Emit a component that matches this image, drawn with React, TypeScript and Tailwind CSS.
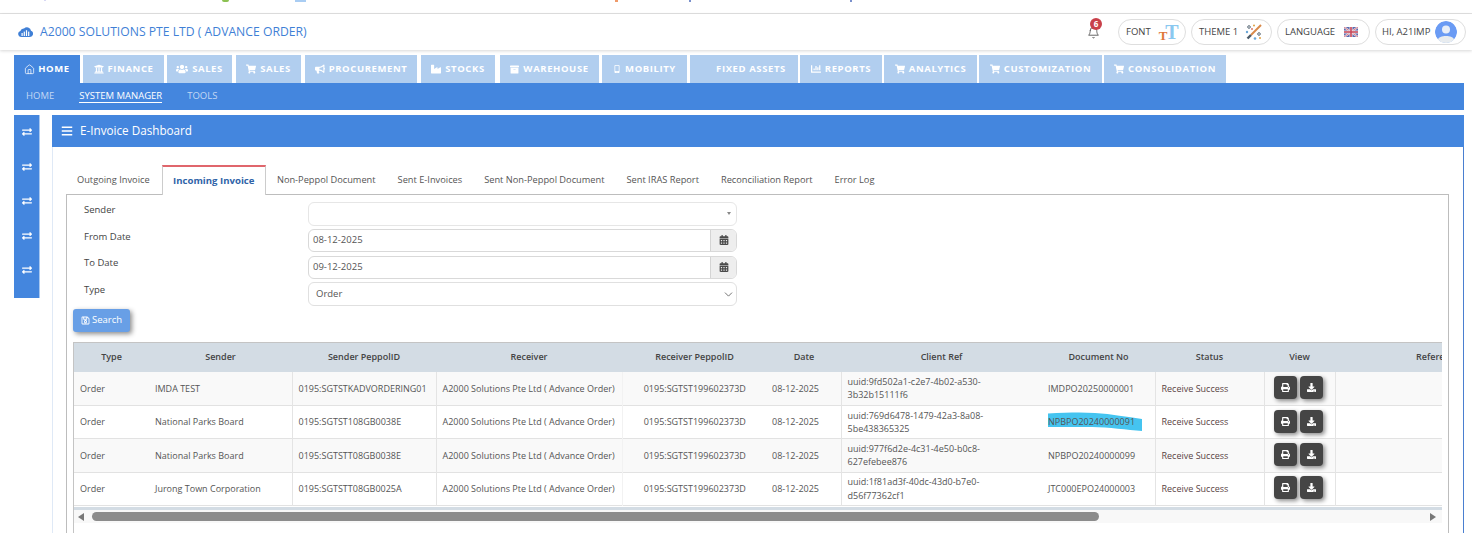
import React from "react";
import { FaUniversity, FaUsers, FaShoppingCart, FaBullhorn, FaIndustry, FaMobileAlt, FaArchive, FaChartBar, FaExchangeAlt, FaBars, FaRegSave, FaCalendarAlt, FaPrint, FaDownload } from "react-icons/fa";
import { LuHouse, LuBell, LuChevronDown } from "react-icons/lu";

const navTabs: { label: string; w: string; icon?: React.ReactNode; mr: string }[] = [
  { label: "FINANCE", w: "w-[81px]", icon: <FaUniversity size={10} />, mr: "mr-[3px]" },
  { label: "SALES", w: "w-[65px]", icon: <FaUsers size={12} />, mr: "mr-[4px]" },
  { label: "SALES", w: "w-[65px]", icon: <FaShoppingCart size={10} />, mr: "mr-[4px]" },
  { label: "PROCUREMENT", w: "w-[112px]", icon: <FaBullhorn size={10} />, mr: "mr-[4px]" },
  { label: "STOCKS", w: "w-[74px]", icon: <FaIndustry size={10} />, mr: "mr-[5px]" },
  { label: "WAREHOUSE", w: "w-[99px]", icon: <FaArchive size={9} />, mr: "mr-[3px]" },
  { label: "MOBILITY", w: "w-[85px]", icon: <FaMobileAlt size={8} />, mr: "mr-[3px]" },
  { label: "FIXED ASSETS", w: "w-[108px] pl-[14px]", mr: "mr-[2px]" },
  { label: "REPORTS", w: "w-[82px]", icon: <FaChartBar size={10} />, mr: "mr-[2px]" },
  { label: "ANALYTICS", w: "w-[93px]", icon: <FaShoppingCart size={10} />, mr: "mr-[2px]" },
  { label: "CUSTOMIZATION", w: "w-[123px]", icon: <FaShoppingCart size={10} />, mr: "mr-[2px]" },
  { label: "CONSOLIDATION", w: "w-[122px]", icon: <FaShoppingCart size={10} />, mr: "" },
];

const invoiceTabs = ["Outgoing Invoice", "Incoming Invoice", "Non-Peppol Document", "Sent E-Invoices", "Sent Non-Peppol Document", "Sent IRAS Report", "Reconciliation Report", "Error Log"];

const rows = [
  ["IMDA TEST", "0195:SGTSTKADVORDERING01", "uuid:9fd502a1-c2e7-4b02-a530-3b32b15111f6", "IMDPO20250000001"],
  ["National Parks Board", "0195:SGTST108GB0038E", "uuid:769d6478-1479-42a3-8a08-5be438365325", "NPBPO20240000091"],
  ["National Parks Board", "0195:SGTSTT08GB0038E", "uuid:977f6d2e-4c31-4e50-b0c8-627efebee876", "NPBPO20240000099"],
  ["Jurong Town Corporation", "0195:SGTSTT08GB0025A", "uuid:1f81ad3f-40dc-43d0-b7e0-d56f77362cf1", "JTC000EPO24000003"],
];

const headers: [string, string][] = [
  ["Type", "w-[75px]"], ["Sender", "w-[143px]"], ["Sender PeppolID", "w-[144px]"], ["Receiver", "w-[186px]"],
  ["Receiver PeppolID", "w-[145px]"], ["Date", "w-[74px]"], ["Client Ref", "w-[201px]"], ["Document No", "w-[113px]"],
  ["Status", "w-[109px]"], ["View", "w-[71px]"], ["Reference", "w-[206px]"],
];

function CloudIcon() {
  return (
    <svg width="15" height="11" viewBox="0 0 15 11" className="mr-[7px]">
      <path d="M3 11a3 3 0 0 1-.6-5.9A3.4 3.4 0 0 1 6 2.6 4 4 0 0 1 13 4.8 3.2 3.2 0 0 1 12 11z" fill="#3f7fd6" />
      <rect x="3.5" y="7" width="1.2" height="3" fill="#fff" />
      <rect x="5.7" y="5.6" width="1.2" height="4.4" fill="#fff" />
      <rect x="7.9" y="4.2" width="1.2" height="5.8" fill="#fff" />
      <rect x="10.1" y="5.6" width="1.2" height="4.4" fill="#fff" />
    </svg>
  );
}

function ThemeIcon() {
  return (
    <svg width="18" height="18" viewBox="0 0 18 18">
      <path d="M16 2 L6 12" stroke="#d98a4a" strokeWidth="2" />
      <path d="M6 12 L2.5 15.5" stroke="#4b5a68" strokeWidth="2.4" />
      <circle cx="4" cy="4" r="1.3" fill="none" stroke="#5b6b78" strokeWidth="1" />
      <circle cx="9" cy="2.5" r="1" fill="#e0a040" />
      <circle cx="2" cy="9" r="1.2" fill="#6aa7d8" />
      <circle cx="14" cy="11" r="1.3" fill="none" stroke="#5b6b78" strokeWidth="1" />
      <circle cx="10" cy="15.5" r="1.3" fill="#6aa7d8" />
      <circle cx="15" cy="15" r="1" fill="#e0a040" />
      <circle cx="7" cy="6" r="0.9" fill="#d96b5a" />
    </svg>
  );
}

function FlagIcon() {
  return (
    <svg width="14" height="10" viewBox="0 0 14 10">
      <rect width="14" height="10" fill="#5a6bb0" />
      <path d="M0 0 L14 10 M14 0 L0 10" stroke="#eadfe6" strokeWidth="2" />
      <path d="M0 0 L14 10 M14 0 L0 10" stroke="#cf5a6a" strokeWidth="0.7" />
      <path d="M7 0 V10 M0 5 H14" stroke="#eadfe6" strokeWidth="3" />
      <path d="M7 0 V10 M0 5 H14" stroke="#c9485a" strokeWidth="1.6" />
    </svg>
  );
}

function AvatarIcon() {
  return (
    <svg width="22" height="22" viewBox="0 0 22 22" className="rounded-full">
      <circle cx="11" cy="11" r="11" fill="#6a9bf4" />
      <circle cx="11" cy="8.5" r="4" fill="#e8eef8" />
      <path d="M2.5 19 C4 13.5 18 13.5 19.5 19 L16 22 H6 Z" fill="#e8ecef" />
    </svg>
  );
}

function Pill({ children, w }: { children: React.ReactNode; w: string }) {
  return <div className={`${w} h-[26px] border border-[#dedede] rounded-full flex items-center text-[9.5px] text-[#444] bg-white`}>{children}</div>;
}

function ActionButton({ children }: { children: React.ReactNode }) {
  return <button className="w-[23px] h-[23px] rounded-[4px] bg-[#454545] text-white flex items-center justify-center shadow-[2px_2px_4px_rgba(0,0,0,0.45)]">{children}</button>;
}

function FormLabel({ children }: { children: React.ReactNode }) {
  return <div className="w-[230px] pl-[11px] text-[9.5px] text-[#444]">{children}</div>;
}

function Marked({ children }: { children: React.ReactNode }) {
  return (
    <span className="relative inline-block">
      <svg width="96" height="20" viewBox="0 0 96 20" className="absolute -left-[1px] -top-[3px]">
        <path d="M1 1.5 C20 0.5 35 0 48 1 C65 2 80 5 95 7 L95 19 C80 18 62 15 45 15 C30 15 15 15 1 15 Z" fill="#45c4f0" />
      </svg>
      <span className="relative">{children}</span>
    </span>
  );
}

export default function App() {
  return (
    <div className="w-[1472px] h-[533px] overflow-hidden bg-white font-['Open_Sans',sans-serif] text-[#444]">
      {/* remains of the page above */}
      <div className="h-[14px] border-b border-[#e2e2e2] flex items-start">
        <div className="ml-[44px] w-[2px] h-[1px] bg-[#d8d8f4]" />
        <div className="ml-[176px] w-[7px] h-[2px] bg-[#8cc152] rounded-b-full" />
        <div className="ml-[66px] w-[11px] h-[2px] bg-[#a9cdf3]" />
        <div className="ml-[309px] w-[3px] h-[2px] bg-[#ef9a6a]" />
        <div className="ml-[71px] w-[2px] h-[2px] bg-[#7a90cc]" />
        <div className="ml-[159px] w-[2px] h-[2px] bg-[#7a90cc]" />
      </div>

      {/* header */}
      <header className="h-[36px] bg-white flex items-center shadow-[0_1px_3px_rgba(0,0,0,0.16)] relative">
        <div className="pl-[18px] flex items-center">
          <CloudIcon />
          <span className="text-[12.2px] font-medium text-[#3f7fd6]">A2000 SOLUTIONS PTE LTD ( ADVANCE ORDER)</span>
        </div>
        <div className="ml-auto flex items-center mr-[6px]">
          <div className="relative mr-[18px] text-[#444]">
            <LuBell size={13} strokeWidth={1.5} />
            <span className="absolute -top-[8px] left-[3px] w-[12px] h-[12px] rounded-full bg-[#c9404a] text-white text-[8px] font-bold flex items-center justify-center">6</span>
          </div>
          <Pill w="w-[68px] mr-[5px]">
            <span className="ml-[7px]">FONT</span>
            <span className="ml-[8px] font-['Liberation_Serif',serif] font-bold leading-none flex items-end">
              <span className="text-[13px] text-[#e0773a]">T</span>
              <span className="text-[20px] text-[#8ac8f0] -ml-[2px]">T</span>
            </span>
          </Pill>
          <Pill w="w-[81px] mr-[5px]">
            <span className="ml-[7px] mr-[7px]">THEME 1</span>
            <ThemeIcon />
          </Pill>
          <Pill w="w-[93px] mr-[5px]">
            <span className="ml-[7px] mr-[9px]">LANGUAGE</span>
            <FlagIcon />
          </Pill>
          <Pill w="w-[91px]">
            <span className="ml-[6px] mr-[5px]">HI, A21IMP</span>
            <AvatarIcon />
          </Pill>
        </div>
      </header>

      {/* nav tabs */}
      <nav className="mt-[5px] ml-[14px] flex h-[28px] items-stretch">
        <div className="w-[66px] mr-[3px] bg-[#4486de] text-white flex items-center justify-center gap-[3px] text-[9.5px] font-bold tracking-[0.6px]">
          <LuHouse size={11} strokeWidth={1.6} />
          <span>HOME</span>
        </div>
        {navTabs.map((t, i) => (
          <div key={i} className={`${t.w} ${t.mr} bg-[#b1ceef] text-white flex items-center justify-center gap-[4px] text-[9.5px] font-bold tracking-[0.6px]`}>
            {t.icon}
            <span>{t.label}</span>
          </div>
        ))}
      </nav>

      {/* sub nav */}
      <div className="ml-[14px] w-[1450px] h-[27px] bg-[#4486de] flex items-center text-[9.5px] pl-[12px]">
        <span className="text-[#c3d8f4]">HOME</span>
        <span className="ml-[25px] text-white border-b border-white leading-[12px]">SYSTEM MANAGER</span>
        <span className="ml-[25px] text-[#c3d8f4]">TOOLS</span>
      </div>

      <div className="mt-[5px] flex">
        {/* left rail */}
        <aside className="ml-[14px] w-[26px] h-[183px] bg-[#4486de] text-white flex flex-col items-center pt-[12px] gap-[24.5px] border-r border-[#a9c8f0]">
          {[0, 1, 2, 3, 4].map((i) => (
            <FaExchangeAlt key={i} size={10} />
          ))}
        </aside>

        {/* main panel */}
        <main className="ml-[12px] w-[1412px] h-[418px] border-l border-r border-l-[#dfe9f6] border-r-[#4a7fd0]">
          <div className="h-[32px] -ml-px -mr-px bg-[#4486de] text-white flex items-center pl-[9px] text-[11.7px]">
            <FaBars size={12} className="mr-[7px]" />
            <span>E-Invoice Dashboard</span>
          </div>

          <div className="pl-[13px] pr-[13px] pt-[18px]">
            {/* invoice tabs */}
            <div className="flex h-[29px] items-stretch relative z-10">
              {invoiceTabs.map((t) => {
                const active = t === "Incoming Invoice";
                return (
                  <div
                    key={t}
                    className={
                      active
                        ? "ml-[1px] px-[10.5px] -mb-px bg-white border-x border-[#ccc] border-t-2 border-t-[#e0666c] flex items-center text-[9.6px] font-bold text-[#2f63a8] whitespace-nowrap"
                        : "px-[11px] flex items-center text-[9.25px] text-[#555] whitespace-nowrap"
                    }
                  >
                    {t}
                  </div>
                );
              })}
            </div>

            {/* tab pane */}
            <div className="w-[1383px] h-[345px] border border-[#bdbdbd] flex flex-col pt-[6px] pl-[6px]">
              <div className="flex items-center h-[25px] mb-[2px]">
                <FormLabel>
                  <span className="relative bottom-[3px]">Sender</span>
                </FormLabel>
                <div className="ml-[5px] w-[429px] h-[24px] border border-[#e6e6e6] rounded-[6px] flex items-center justify-end pr-[5px] text-[#888]">
                  <span className="w-0 h-0 border-x-[2.5px] border-x-transparent border-t-[3px] border-t-[#888]" />
                </div>
              </div>
              <div className="flex items-center h-[24px] mb-[3px]">
                <FormLabel>
                  <span className="relative bottom-[3px]">From Date</span>
                </FormLabel>
                <div className="ml-[5px] w-[429px] h-[23px] border border-[#d9d9d9] rounded-[6px] flex items-stretch overflow-hidden">
                  <div className="flex-1 flex items-center pl-[4px] text-[9.5px] text-[#555]">08-12-2025</div>
                  <div className="w-[26px] bg-[#eeeeee] border-l border-[#d4d4d4] flex items-center justify-center text-[#4a4a4a]">
                    <FaCalendarAlt size={10} />
                  </div>
                </div>
              </div>
              <div className="flex items-center h-[24px] mb-[3px]">
                <FormLabel>
                  <span className="relative bottom-[4px]">To Date</span>
                </FormLabel>
                <div className="ml-[5px] w-[429px] h-[23px] border border-[#d9d9d9] rounded-[6px] flex items-stretch overflow-hidden">
                  <div className="flex-1 flex items-center pl-[4px] text-[9.5px] text-[#555]">09-12-2025</div>
                  <div className="w-[26px] bg-[#eeeeee] border-l border-[#d4d4d4] flex items-center justify-center text-[#4a4a4a]">
                    <FaCalendarAlt size={10} />
                  </div>
                </div>
              </div>
              <div className="flex items-center h-[24px]">
                <FormLabel>
                  <span className="relative bottom-[4px]">Type</span>
                </FormLabel>
                <div className="ml-[5px] w-[429px] h-[24px] border border-[#e0e0e0] rounded-[6px] flex items-center justify-between pl-[7px] pr-[1px] text-[9.5px] text-[#555]">
                  <span>Order</span>
                  <LuChevronDown size={13} strokeWidth={1.5} className="text-[#555]" />
                </div>
              </div>

              <button className="mt-[3px] w-[57px] h-[23px] shrink-0 rounded-[3px] bg-[#689fe6] text-white text-[9.5px] flex items-center justify-center gap-[2px] shadow-[2px_2px_5px_rgba(0,0,0,0.45)]">
                <FaRegSave size={9} />
                <span>Search</span>
              </button>

              {/* table */}
              <div className="mt-[10px] w-[1369px] border-l border-t border-[#c4c4c4] overflow-hidden flex-1">
                <table className="table-fixed border-collapse w-[1467px] text-[9px] text-[#555]">
                  <thead>
                    <tr className="h-[29px] bg-[#d3dce4]">
                      {headers.map(([h, w]) => (
                        <th key={h} className={`${w} pb-[2px] text-center font-semibold text-[9px] text-[#444]`}>
                          {h}
                        </th>
                      ))}
                    </tr>
                  </thead>
                  <tbody>
                    {rows.map((r, i) => (
                      <tr key={i} className={`h-[33.4px] ${i % 2 === 0 ? "bg-[#f9f9f9]" : "bg-white"} border-b border-[#e2e2e2]`}>
                        <td className="pl-[6px]">Order</td>
                        <td className="pl-[6px]">{r[0]}</td>
                        <td className="pl-[6px] border-l border-[#e4e4e4] whitespace-nowrap">{r[1]}</td>
                        <td className="pl-[6px] border-l border-[#e4e4e4] whitespace-nowrap">A2000 Solutions Pte Ltd ( Advance Order)</td>
                        <td className="text-center border-l border-[#f2f2f2]">0195:SGTST199602373D</td>
                        <td className="pl-[5px]">08-12-2025</td>
                        <td className="pl-[6px] border-l border-[#e4e4e4] leading-[13.5px]">
                          <div className="w-[170px] break-words">{r[2]}</div>
                        </td>
                        <td className="pl-[6px] whitespace-nowrap">{i === 1 ? <Marked>{r[3]}</Marked> : r[3]}</td>
                        <td className="pl-[6px] border-l border-[#e4e4e4] text-[#5a4444]">Receive Success</td>
                        <td className="pl-[9px] border-l border-[#e4e4e4]">
                          <div className="flex gap-[3px] relative bottom-[1px]">
                            <ActionButton>
                              <FaPrint size={9} />
                            </ActionButton>
                            <ActionButton>
                              <FaDownload size={9} />
                            </ActionButton>
                          </div>
                        </td>
                        <td className="border-l border-[#e4e4e4]" />
                      </tr>
                    ))}
                  </tbody>
                </table>
                {/* scrollbar */}
                <div className="h-[16px] mt-[1px] border-t-[3px] border-[#d3dce4] bg-[#f8f8f8] flex items-center pl-[4px] pr-[6px]">
                  <span className="w-0 h-0 border-y-[4px] border-y-transparent border-r-[6px] border-r-[#777]" />
                  <div className="ml-[8px] w-[1007px] h-[9px] rounded-full bg-[#8c8c8c]" />
                  <span className="ml-auto w-0 h-0 border-y-[4px] border-y-transparent border-l-[6px] border-l-[#777]" />
                </div>
              </div>
            </div>
          </div>
        </main>
      </div>
    </div>
  );
}
